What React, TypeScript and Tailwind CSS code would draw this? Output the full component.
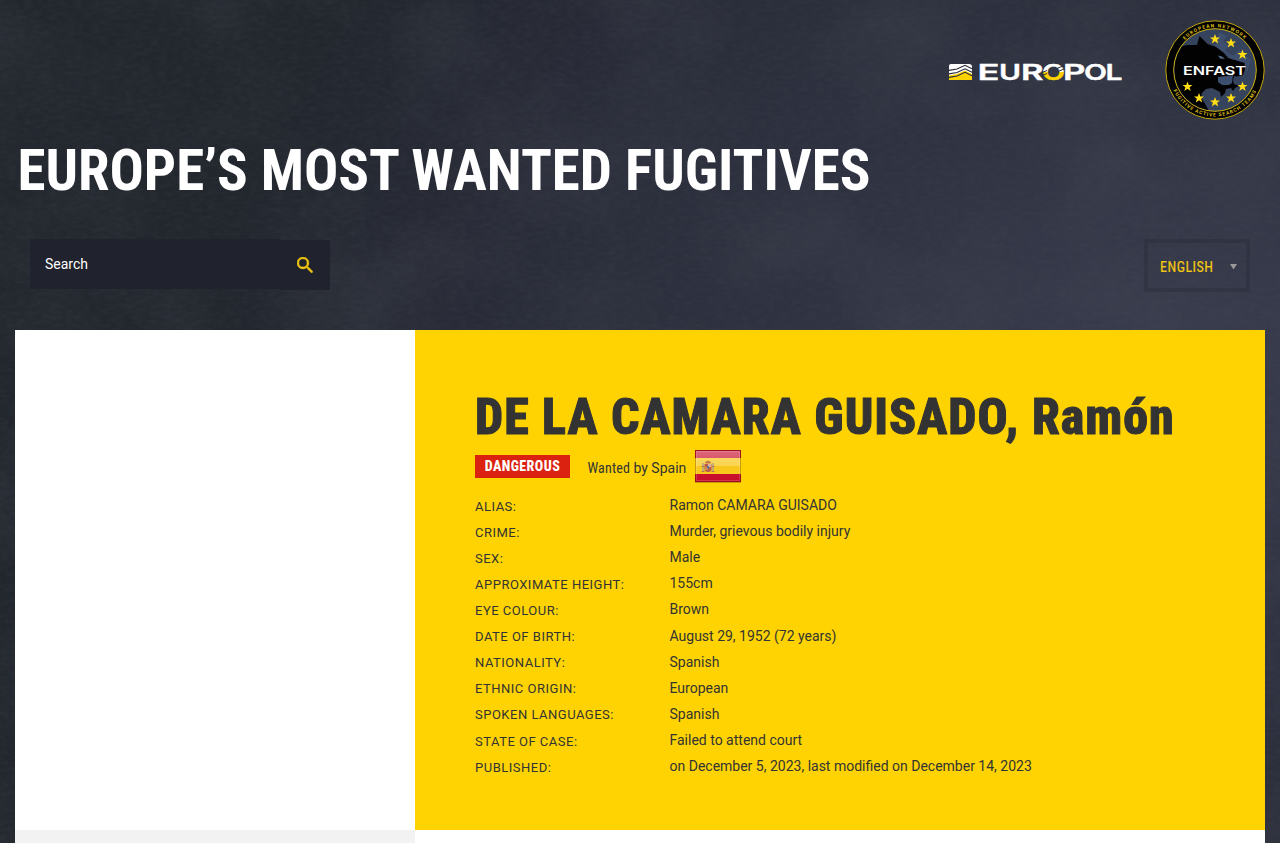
import React from "react";

const condensed = "font-['Roboto_Condensed','Roboto',sans-serif] [font-stretch:75%]";

const details: [string, string][] = [
  ["Alias:", "Ramon CAMARA GUISADO"],
  ["Crime:", "Murder, grievous bodily injury"],
  ["Sex:", "Male"],
  ["Approximate height:", "155cm"],
  ["Eye colour:", "Brown"],
  ["Date of birth:", "August 29, 1952 (72 years)"],
  ["Nationality:", "Spanish"],
  ["Ethnic origin:", "European"],
  ["Spoken languages:", "Spanish"],
  ["State of case:", "Failed to attend court"],
  ["Published:", "on December 5, 2023, last modified on December 14, 2023"],
];

function Texture() {
  return (
    <svg className="pointer-events-none absolute inset-0 h-full w-full" aria-hidden="true">
      <defs>
        <filter id="grain" x="0" y="0" width="100%" height="100%">
          <feTurbulence type="fractalNoise" baseFrequency="0.12 0.25" numOctaves="3" seed="4" />
          <feColorMatrix values="0 0 0 0 0.08  0 0 0 0 0.09  0 0 0 0 0.11  0.5 0 0 0 -0.16" />
        </filter>
        <filter id="stains" x="0" y="0" width="100%" height="100%">
          <feTurbulence type="fractalNoise" baseFrequency="0.007 0.009" numOctaves="5" seed="21" />
          <feColorMatrix values="0 0 0 0 0.08  0 0 0 0 0.09  0 0 0 0 0.11  1.2 0 0 0 -0.48" />
        </filter>
      </defs>
      <rect width="100%" height="100%" filter="url(#stains)" opacity="0.38" />
      <rect width="100%" height="100%" filter="url(#grain)" opacity="0.5" />
    </svg>
  );
}

const europolLetters: [string, number, number][] = [
  ["E", 37.5, 22],
  ["U", 59, 22],
  ["R", 81, 22.5],
  ["O", 102, 23],
  ["P", 123, 22.5],
  ["O", 144, 23],
  ["L", 165.5, 17],
];

function EuropolLogo() {
  return (
    <svg width="178" height="36" viewBox="0 -8 178 36" aria-label="Europol">
      <defs>
        <linearGradient id="euO" x1="0" y1="0" x2="0" y2="1">
          <stop offset="0.5" stopColor="#fff" />
          <stop offset="0.5" stopColor="#ffd302" />
        </linearGradient>
      </defs>
      <g>
        <path d="M3 2h18q3 0 3 3v13H1V4q0-2 2-2z" fill="#fff" />
        <path d="M1 13.500 9 12 17 8.500 24 12v6H1z" fill="#ffd302" />
        <g fill="none" stroke="#282a37" strokeWidth="1.2">
          <path d="M1 8.300 9 7 17 3.300 24 6.800" />
          <path d="M1 11.800 9 10.500 17 6.800 24 10.300" />
          <path d="M1 15.300 9 14 17 10.300 24 13.800" />
        </g>
      </g>
      <g fontFamily="Inter, sans-serif" fontWeight="600" fontSize="22">
        {europolLetters.map(([c, x, w], i) => (
          <text
            key={i}
            x={x - 8}
            y="17.8"
            textLength={w}
            lengthAdjust="spacingAndGlyphs"
            fill={i === 3 ? "url(#euO)" : "#fff"}
            stroke={i === 3 ? "url(#euO)" : "#fff"}
            strokeWidth="0.4"
            strokeLinejoin="miter"
          >
            {c}
          </text>
        ))}
      </g>
      <g stroke="#282a37" strokeWidth="1" fill="none">
        <path d="M94 10.500 99 8.500M94 13.500 99 11.500M109 6.500 116 3.500M110 9.500 116 7" />
      </g>
    </svg>
  );
}

function Star({ x, y }: { x: number; y: number }) {
  return (
    <path
      transform={`translate(${x} ${y})`}
      fill="#ffdc14"
      d="M0-5 1.3-1.6 5-1.6 2.1.7 3.2 4.4 0 2.2-3.2 4.4-2.1.7-5-1.6-1.3-1.6z"
    />
  );
}

const stars: [number, number][] = [
  [60, 29],
  [76, 33],
  [87.5, 44.5],
  [87.5, 76.5],
  [76, 88],
  [60, 92],
  [44, 88],
  [32.5, 76.5],
];

function EnfastBadge() {
  return (
    <svg width="100" height="100" viewBox="10 10 100 100" aria-label="Enfast">
      <defs>
        <clipPath id="disc">
          <circle cx="60" cy="60" r="40.6" />
        </clipPath>
        <path id="arcTop" d="M17.3 60a42.7 42.7 0 0 1 85.4 0" />
        <path id="arcBottom" d="M13.5 60a46.5 46.5 0 0 0 93 0" />
      </defs>
      <circle cx="60" cy="60" r="49.2" fill="#020203" stroke="#c2a70c" strokeWidth="1" />
      <circle cx="60" cy="60" r="41.3" fill="#35435c" stroke="#d0b30d" strokeWidth="1" />
      <g clipPath="url(#disc)">
        <path d="M64 22 72 26 68 31 74 36 70 40 78 46 84 40 96 50 92 62 80 52 70 44 60 36z" fill="#415473" opacity=".7" />
        <path
          d="M10 10 38 18 24 37 32 35 42 35 44.5 26 52.5 34 61 37 69 43 73 48 83 51 89.5 53 90 59 88 65 82 66.500 79 66 78 71 79 74 82 75 84 76 80 78 78 81 76 78 71 79 70 83 66 87 65 82 57 78 51 79 47 83 46 88 49 92 54 101 30 110 10 100z"
          fill="#020203"
        />
        <path d="M63 67 72 66 78 65 77 73 74 75 67 75 63 72z" fill="#3d4f6e" />
        <path d="M63 45.500 67 46.500 70 49 65 48.500z" fill="#55698a" />
      </g>
      {stars.map(([x, y]) => (
        <Star key={`${x}-${y}`} x={x} y={y} />
      ))}
      <text x="28" y="64.6" textLength="63" lengthAdjust="spacingAndGlyphs" fontFamily="Inter, sans-serif" fontWeight="600" fontSize="11.8" fill="#fff">
        ENFAST
      </text>
      <g fontFamily="Roboto, sans-serif" fontWeight="700" fontSize="4.9" fill="#d9bc12">
        <text letterSpacing="1.1">
          <textPath href="#arcTop" startOffset="50%" textAnchor="middle">
            EUROPEAN NETWORK
          </textPath>
        </text>
        <text letterSpacing="0.95">
          <textPath href="#arcBottom" startOffset="50%" textAnchor="middle">
            FUGITIVE ACTIVE SEARCH TEAMS
          </textPath>
        </text>
      </g>
    </svg>
  );
}

function SpainFlag() {
  return (
    <svg width="48" height="35" viewBox="0 0 48 35" aria-label="Spain">
      <defs>
        <linearGradient id="gloss" x1="0" y1="0" x2="0" y2="1">
          <stop offset="0" stopColor="#fff" stopOpacity=".38" />
          <stop offset="1" stopColor="#fff" stopOpacity=".22" />
        </linearGradient>
      </defs>
      <rect x="1" y="2" width="46" height="32" fill="#6b4a00" opacity=".4" />
      <rect x="1" y="1" width="46" height="32" fill="#c8102e" />
      <rect x="1" y="9" width="46" height="16" fill="#f8c81c" />
      <rect x="1" y="1" width="46" height="16" fill="url(#gloss)" />
      <rect x="1.5" y="1.5" width="45" height="31" fill="none" stroke="#a30d20" />
      <rect x="1" y="9" width="1" height="16" fill="#c99a10" />
      <rect x="46" y="9" width="1" height="16" fill="#c99a10" />
      <rect x="2.5" y="2.5" width="43" height="29" fill="none" stroke="#fff" opacity=".15" />
      <g>
        <path d="M11.500 14.500 11 13 14 11.500 17 13 16.500 14.500z" fill="#c47848" />
        <path d="M10.500 15h7v5q0 3-3.500 3t-3.500-3z" fill="#b95a50" />
        <rect x="14" y="15" width="3" height="3" fill="#d9b8a8" />
        <rect x="11" y="18" width="3" height="3" fill="#cf8f48" />
        <rect x="13" y="17" width="2" height="2.500" fill="#6874a0" />
        <path d="M9 14v8M19 14v8" stroke="#b8a488" strokeWidth="1.600" />
        <path d="M7.500 22.500h3M17.500 22.500h3M7.500 17.500h2.500M18 17.500h2.500" stroke="#b07850" />
      </g>
    </svg>
  );
}

function SearchBox() {
  return (
    <form className="flex h-[51px] items-start">
      <input
        className="h-[50px] w-[250px] bg-[#20222d] pl-[15px] font-['Roboto',sans-serif] text-sm text-white outline-none placeholder:text-white placeholder:opacity-100"
        placeholder="Search"
      />
      <button type="button" className="mt-px flex h-[50px] w-[50px] items-center justify-center bg-[#20222d]" aria-label="Submit">
        <svg className="mb-px" width="16" height="16" viewBox="3 3 17.5 17.5" fill="#f2c811">
          <path d="M15.500 14h-.79l-.28-.27A6.470 6.470 0 0 0 16 9.500 6.500 6.500 0 1 0 9.500 16c1.610 0 3.090-.59 4.230-1.570l.27.28v.79l5 4.990L20.490 19l-4.990-5zm-6 0a4.500 4.500 0 1 1 0-9 4.500 4.500 0 0 1 0 9z" stroke="#f2c811" strokeWidth=".6" />
        </svg>
      </button>
    </form>
  );
}

export default function App() {
  return (
    <div className="relative h-[843px] overflow-hidden bg-[#2a2c39] bg-[radial-gradient(ellipse_75%_85%_at_92%_42%,#393d4e_0%,#2f3241_40%,#282b37_75%,#22262d_100%)] font-['Roboto',sans-serif] text-[#333]">
      <Texture />
      <div className="relative flex h-full flex-col px-[15px]">
        <header className="flex h-[330px] flex-col">
          <div className="flex h-[120px] items-start justify-end pt-5">
            <div className="mr-[39px] mt-[34px]">
              <EuropolLogo />
            </div>
            <EnfastBadge />
          </div>
          <h1 className={`${condensed} mt-[17px] whitespace-nowrap pl-[2.500px] text-[57px] font-bold leading-[67px] tracking-[-0.03px] text-white`}>
            EUROPE’S MOST WANTED FUGITIVES
          </h1>
          <div className="mt-[35px] flex items-start justify-between pl-[15px] pr-[15px]">
            <SearchBox />
            <div className="flex h-[53px] w-[106px] items-center justify-between border-4 border-[#20222d]/25 pl-3 pr-[9px] pt-[2px]">
              <span className={`${condensed} text-sm tracking-[0.5px] text-[#f2c811] [-webkit-text-stroke:0.2px_#f2c811]`}>ENGLISH</span>
              <svg width="7" height="6" viewBox="0 0 7 6">
                <path d="M0 0h7L3.500 5.500z" fill="#999" />
              </svg>
            </div>
          </div>
        </header>

        <main className="grid flex-1 grid-cols-[400px_1fr] grid-rows-[500px_1fr]">
          <div className="bg-white" />
          <section className="bg-[#ffd302] pl-[60px] pt-[57px]">
            <h2 className={`${condensed} whitespace-nowrap text-[50px] font-extrabold leading-[60px] tracking-[0.960px] [-webkit-text-stroke:1px_#333]`}>
              DE LA CAMARA GUISADO, Ramón
            </h2>
            <div className="mt-[2px] flex h-[35px] items-start">
              <span className={`${condensed} mt-[6px] h-[23px] w-[95px] bg-[#db2110] text-center text-sm font-extrabold leading-[23px] tracking-[0.4px] text-white`}>
                DANGEROUS
              </span>
              <span className="ml-[17.500px] mt-[9px] w-[98.500px] whitespace-nowrap text-sm leading-5">
                <span className={`${condensed} tracking-[0.15px]`}>Wanted</span> by Spain
              </span>
              <span className="ml-[8px]">
                <SpainFlag />
              </span>
            </div>
            <dl className="mt-[10px]">
              {details.map(([label, value]) => (
                <div key={label} className="grid h-[26.100px] grid-cols-[194.500px_1fr] whitespace-nowrap">
                  <dt className="pt-[2.700px] text-[13px] uppercase leading-5 tracking-[0.5px]">{label}</dt>
                  <dd className="pt-[1.050px] text-sm leading-5">{value}</dd>
                </div>
              ))}
            </dl>
          </section>
          <div className="bg-[#f2f2f2]" />
          <div className="bg-white" />
        </main>
      </div>
    </div>
  );
}
